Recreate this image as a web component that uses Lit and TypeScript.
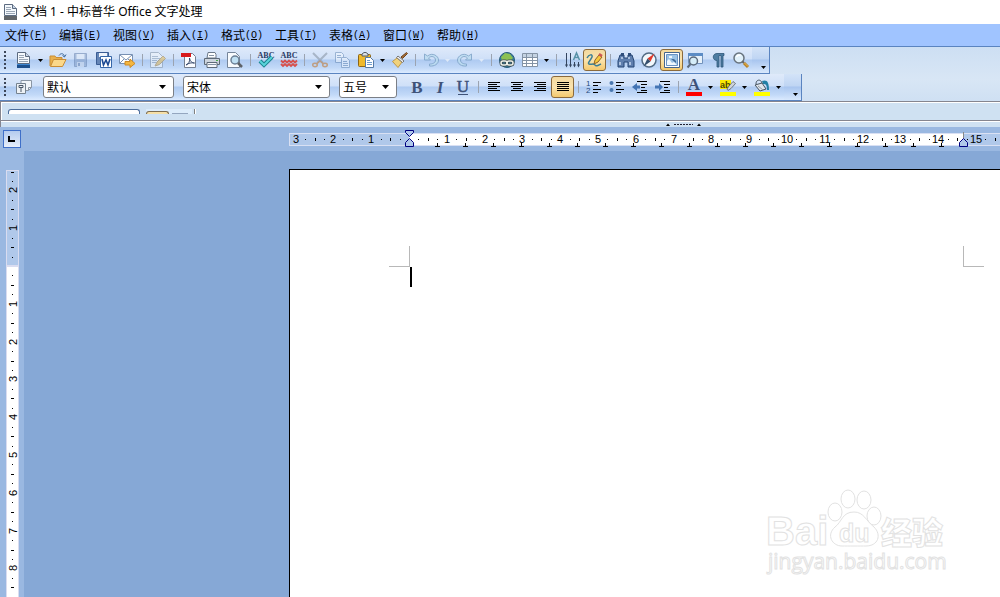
import { LitElement, html, svg, css, nothing } from "lit";
import { customElement, property, state } from "lit/decorators.js";

const doc = svg`<path d="M1.5 .5h8l4 4v7h-12z" fill="#f4f8fc" stroke="#5c6b80"/><path d="M9.5 .5v4h4" fill="#c9d6e6" stroke="#5c6b80"/><path d="M3 3.5h5M3 5.5h5M3 7.5h9M3 9.5h9" stroke="#9aa6b5"/>`;

const icons: Record<string, unknown> = {
  app: svg`${doc}<rect x="1" y="12" width="13" height="4" fill="#606468"/>`,
  newdoc: svg`${doc}<path d="M1 12h13v4H1z" fill="#1c4f8c"/><path d="M1 12.500h13" stroke="#3d86d0"/>`,
  open: svg`<path d="M0 14V4h5l1 1.500h6V8" fill="#e9b04c" stroke="#c98d35"/><path d="M.5 14.500L3.500 7.500H16L12.500 14.500z" fill="#fbd88a" stroke="#c98d35"/><path d="M9 3.500c2-3 5-2 5.500 1M12.500 3.500l2 1.500 1.500-2.500" fill="none" stroke="#3d6a9c"/>`,
  save: svg`<g opacity=".5"><path d="M1.500 1.500h12v13h-12z" fill="#7e99c2" stroke="#5a76a5"/><path d="M3.500 2h8v5h-8z" fill="#e6eef8"/><path d="M4 10h7v5H4z" fill="#c7d4e8"/><path d="M5 11h2v3H5z" fill="#5a76a5"/></g>`,
  word: svg`<path d="M.5 .5h12v12H.500z" fill="#6485b6" stroke="#3b5d94"/><path d="M3 1h8v4H3z" fill="#eff4fb"/><path d="M4.500 4.500h11v11h-11z" fill="#fff" stroke="#3566a8"/><path d="M6 7l1.500 6L10 8l2 5 2-6" fill="none" stroke="#1c4a94" stroke-width="1.600"/>`,
  mail: svg`<path d="M.5 2.500h13v9H.500z" fill="#fff" stroke="#7790b3"/><path d="M1 3l6 5 6-5M1 11l4-4M13 11L9 7" fill="none" stroke="#7790b3"/><path d="M6 9.500h5V7l5 4.500-5 4V13H6z" fill="#f4b63f" stroke="#ce8a22"/>`,
  edit: svg`<g opacity=".6"><path d="M.5 .5h8l4 4v11H.500z" fill="#eff5fb" stroke="#8899ad"/><path d="M2 4.500h6M2 6.500h8M2 8.500h5M2 10.500h4" stroke="#93a6bc"/><path d="M5 14l2-4 6-6 2.500 2.500-6 6z" fill="#e2bd62" stroke="#a78b55"/></g>`,
  pdf: svg`<path d="M3.500 1.500h8l3 3v11h-11z" fill="#fafcff" stroke="#747f90"/><path d="M0 1h10v4H0z" fill="#d7191c"/><path d="M5 13c3-1 4-4 3.500-7 1 4 3 5 5 5-3-.5-6 0-8.500 2z" fill="none" stroke="#3a4d70"/>`,
  print: svg`<path d="M4 .5h7l1 2V6H3z" fill="#fff" stroke="#6c7989"/><path d="M.5 6.500h15v6H.500z" fill="#cdd5de" stroke="#5e6a78"/><path d="M3 10.500h10v5H3z" fill="#f6f8fb" stroke="#5e6a78"/><path d="M4 12.500h8M5 3.500h5" stroke="#8694a5"/><path d="M12 8h2v1h-2z" fill="#4caa49"/>`,
  preview: svg`<path d="M.5 .5h8l4 4v11H.500z" fill="#f8fbfe" stroke="#75859a"/><circle cx="8" cy="8" r="4" fill="#bfe0f4" stroke="#6b7f96" stroke-width="1.500"/><path d="M11 11l4 4" stroke="#5d6268" stroke-width="2.500"/>`,
  abcheck: svg`<text x="8" y="6" text-anchor="middle" class="abc">ABC</text><path d="M2 9l4 4 8-8" fill="none" stroke="#19828d" stroke-width="4"/><path d="M2 9l4 4 8-8" fill="none" stroke="#59d3da" stroke-width="2"/>`,
  abwave: svg`<text x="8" y="6" text-anchor="middle" class="abc">ABC</text><path d="M0 8.500l2 2 2-2 2 2 2-2 2 2 2-2 2 2 2-2M0 12l2 2 2-2 2 2 2-2 2 2 2-2 2 2 2-2" fill="none" stroke="#d64f4c" stroke-width="1.800"/>`,
  cut: svg`<g opacity=".6"><path d="M1 1l10 10M15 1L5 11" stroke="#8b98a8" stroke-width="2"/><ellipse cx="3" cy="13" rx="2.300" ry="1.700" fill="none" stroke="#c27c38" stroke-width="1.500"/><ellipse cx="13" cy="13" rx="2.300" ry="1.700" fill="none" stroke="#c27c38" stroke-width="1.500"/><path d="M4.500 12L8 9l3.500 3" fill="none" stroke="#c27c38" stroke-width="1.500"/></g>`,
  copy: svg`<g opacity=".5" stroke="#5f83ae" fill="#f4f9ff"><path d="M.5 .5h6l2 2v8H.500z"/><path d="M6.500 5.500h5l3 3v7h-8z"/><path d="M2 3.500h4M2 5.500h4M8 9.500h4M8 11.500h5M8 13.500h5"/></g>`,
  paste: svg`<rect x=".5" y="2.500" width="12" height="12" rx="1" fill="#efb92c" stroke="#8d6515"/><path d="M4 4V2l2-1.500h2L10 2v2z" fill="#dadfe4" stroke="#555d66"/><path d="M7.500 5.500h5l3 3v7h-8z" fill="#fff" stroke="#557aa6"/><path d="M9 8.500h3M9 10.500h5M9 12.500h5" stroke="#6d9ccc"/>`,
  brush: svg`<path d="M14.500 .5l1 1-5 5-1.500-1.500z" fill="#a46c36" stroke="#6e4520"/><path d="M5 6l5 4-4 5.500-5.500-6z" fill="#f0d27c" stroke="#c09848"/><path d="M6 4l6 5-1.500 1.500-6-5z" fill="#efefef" stroke="#777"/>`,
  undo: svg`<path d="M1.500 2v6h6L5.500 6c3-3 7-1 7 2s-3 4-6 4v2c5 .5 9-2 9-6s-6-8-11-4z" fill="#bbdcf0" stroke="#7aa0c5" opacity=".8"/>`,
  redo: svg`<path d="M14.500 2v6h-6l2-2c-3-3-7-1-7 2s3 4 6 4v2c-5 .5-9-2-9-6s6-8 11-4z" fill="#bbdcf0" stroke="#7aa0c5" opacity=".8"/>`,
  link: svg`<circle cx="8" cy="8" r="7.500" fill="#357b9d" stroke="#285b77"/><path d="M2 5l4-4 5 1 3 4-4 4-7-1z" fill="#8cc152"/><g fill="none" stroke="#414d50" stroke-width="3"><rect x="2" y="9" width="6" height="4" rx="2"/><rect x="8" y="9" width="6" height="4" rx="2"/></g><g fill="none" stroke="#eef2ea" stroke-width="1.500"><rect x="2" y="9" width="6" height="4" rx="2"/><rect x="8" y="9" width="6" height="4" rx="2"/></g>`,
  table: svg`<path d="M.5 1.500h15v13H.500z" fill="#fff" stroke="#8493a5"/><path d="M1 2h14v3H1z" fill="#c5d3e2"/><path d="M.5 5.500h15M.5 8.500h15M.5 11.500h15M4.500 2v12M10.500 2v12" stroke="#8493a5"/>`,
  vertical: svg`<path d="M2.500 1v13M6.500 1v13M10.500 10v4M14.500 10v4" stroke="#33445e"/><path d="M1 12.500h3l-1.500 3zM5 12.500h3l-1.500 3zM9 12.500h3l-1.500 3zM13 12.500h3l-1.500 3z" fill="#33445e"/><path d="M9.500 8l3-7 3 7M10.500 5.500h4" fill="none" stroke="#5792a8" stroke-width="1.500"/>`,
  pen: svg`<path d="M0 6c2-4 6-4 5-1s-5 6-3 7 5-1 6 1 4 0 6-1" fill="none" stroke="#3c7f96" stroke-width="1.500"/><path d="M7 12l1-4 4-5 3 2-4 5z" fill="#f7c83c" stroke="#936324"/><path d="M12 2l3 2" stroke="#ce5753" stroke-width="2.500"/>`,
  binoculars: svg`<path d="M2 3h4v3h4V3h4l2 6v6h-6v-5H6v5H0V9z" fill="#5f7fae" stroke="#274775"/><path d="M3 1h3v3H3zM10 1h3v3h-3z" fill="#304f7c"/><path d="M2 10v3M12 10v3M4 5v2M11 5v2" stroke="#c7d9ef" stroke-width="1.500"/>`,
  compass: svg`<circle cx="8" cy="8" r="7" fill="#f2f8fc" stroke="#526b84" stroke-width="1.500"/><path d="M13.500 1.500L9.500 9.500 6.500 6.500z" fill="#e0392b"/><path d="M2.500 14.500l4-8 3 3z" fill="#35506e"/>`,
  picture: svg`<path d="M.5 .5h15v15H.500z" fill="#fff" stroke="#46658c"/><path d="M2.500 2.500h11v11h-11z" fill="#9cc3e6" stroke="#6b94c4"/><path d="M3 13V9l2-2 3 4 2-1 3 3zM5 4h3v2H5z" fill="#f0f7fd"/><path d="M7 7l5 4v-2l-2-2z" fill="#416b99"/>`,
  pageview: svg`<path d="M1.500 1.500h14v10h-14z" fill="#e6f1fb" stroke="#7192bc"/><path d="M1 1h15v3H1z" fill="#5c8cc5"/><circle cx="6.500" cy="9" r="4" fill="#d4ecf8" stroke="#5b6a7c" stroke-width="1.500"/><path d="M3.500 12l-3 3.500" stroke="#5b6a7c" stroke-width="2"/>`,
  pilcrow: svg`<path d="M7 8.500C2 8.500 2 1.500 7 1.500h7v2h-1V15h-2V3.500H9V15H7V8.500z" fill="#4e7da2" stroke="#2e5779" stroke-width=".8"/>`,
  zoom: svg`<circle cx="6" cy="6" r="5" fill="#e1f1fa" stroke="#68737e" stroke-width="1.500"/><path d="M3.500 5c1-2 3-2 4-1.500" stroke="#fff" fill="none" stroke-width="1.500"/><path d="M9.500 9.500l1.500 1.500" stroke="#666" stroke-width="2"/><path d="M11 11l4 4" stroke="#b68127" stroke-width="3"/><path d="M11.500 11l3.500 3.500" stroke="#edbd58"/>`,
  styles: svg`<path d="M5 1.500h10.500v7l-3 3H5z" fill="#f1f5f9" stroke="#8a96a4"/><path d="M12.500 11.500v-3h3" fill="none" stroke="#8a96a4"/><path d="M.5 4.500h9v10h-9z" fill="#edf1f5" stroke="#75828f"/><path d="M3 6.500h4v2H3zM5 8.500V13" fill="none" stroke="#4b5868"/>`,
  bold: svg`<text x="8" y="14" text-anchor="middle" class="fmt">B</text>`,
  italic: svg`<text x="8" y="14" text-anchor="middle" class="fmt italic">I</text>`,
  underline: svg`<text x="8" y="13" text-anchor="middle" class="fmt light">U</text><path d="M3 15.500h10" stroke="#3f5278"/>`,
  left: svg`<path d="M2 3.500h12M2 5.500h9M2 7.500h12M2 9.500h9M2 11.500h12" stroke="#000"/>`,
  center: svg`<path d="M2 3.500h12M4 5.500h8M2 7.500h12M4 9.500h8M2 11.500h12" stroke="#000"/>`,
  right: svg`<path d="M2 3.500h12M5 5.500h9M2 7.500h12M5 9.500h9M2 11.500h12" stroke="#000"/>`,
  justify: svg`<path d="M2 3.500h12M2 5.500h12M2 7.500h12M2 9.500h12M2 11.500h12" stroke="#000"/>`,
  numbers: svg`<text x="0" y="7" class="num">1</text><text x="0" y="14" class="num">2</text><path d="M7 3.500h8M7 6.500h5M7 10.500h8M7 13.500h5" stroke="#000"/>`,
  bullets: svg`<circle cx="2.500" cy="4" r="2" fill="#4a78b0"/><circle cx="2.500" cy="11" r="2" fill="#4a78b0"/><path d="M7 3.500h8M7 6.500h5M7 10.500h8M7 13.500h5" stroke="#000"/>`,
  outdent: svg`<path d="M5 2.500h10M9 5.500h6M9 8.500h4M9 11.500h6M5 13.500h10" stroke="#000"/><path d="M0 8l5-4v2.500h3v3H5V12z" fill="#4475b4"/>`,
  indent: svg`<path d="M5 2.500h10M9 5.500h6M9 8.500h4M9 11.500h6M5 13.500h10" stroke="#000"/><path d="M8 8L4 4v2.500H0v3h4V12z" fill="#4475b4"/>`,
  color: svg`<text x="8" y="11" text-anchor="middle" class="fmt">A</text><path d="M0 13h16v4H0z" fill="#f00"/>`,
  highlight: svg`<path d="M0 1h11v9H0z" fill="#fbe900"/><text x="0" y="9" class="ab">ab</text><path d="M7 10l2-3 4-4.500 2.500 2-4.500 5-3 2z" fill="#ced4d9" stroke="#5a6268" stroke-width=".8"/><path d="M0 13h16v4H0z" fill="#ff0"/>`,
  fill: svg`<path d="M8 2c5-2 7 1 7 9h-2c0-5-1-6-4-6z" fill="#2380a5"/><path d="M1 6l7-2 4 6-6 2z" fill="#e0e5ea" stroke="#46535f"/><path d="M2 5c0-5 5-5 6-1" fill="none" stroke="#46535f"/><path d="M4 7l5 4" stroke="#8d99a5"/><path d="M0 13h16v4H0z" fill="#ff0"/>`,
};

interface Tool {
  kind: "button" | "menu" | "sep";
  icon?: string;
  label?: string;
  on?: boolean;
  off?: boolean;
}
const b = (icon: string, label: string, flags: Partial<Tool> = {}): Tool => ({ kind: "button", icon, label, ...flags });
const m = (label: string, off = false): Tool => ({ kind: "menu", label, off });
const s: Tool = { kind: "sep" };

const standardTools: Tool[] = [
  b("newdoc", "新建"), m("新建类型"), b("open", "打开"), b("save", "保存"), b("word", "另存为"), b("mail", "发送邮件"), s,
  b("edit", "编辑文件"), s, b("pdf", "导出PDF"), b("print", "打印"), b("preview", "页面预览"), s,
  b("abcheck", "拼写检查"), b("abwave", "自动拼写检查"), s, b("cut", "剪切"), b("copy", "复制"), b("paste", "粘贴"), m("粘贴选项"),
  b("brush", "格式刷"), s, b("undo", "撤消"), m("撤消列表", true), b("redo", "恢复"), m("恢复列表", true), s,
  b("link", "超链接"), b("table", "表格"), m("表格尺寸"), s, b("vertical", "文字方向"), b("pen", "绘图", { on: true }), s,
  b("binoculars", "查找和替换"), b("compass", "导航"), b("picture", "图库", { on: true }), b("pageview", "数据源"),
  b("pilcrow", "非打印字符"), b("zoom", "显示比例"),
];
const formatTools: Tool[] = [
  b("bold", "粗体"), b("italic", "斜体"), b("underline", "下划线"), s,
  b("left", "左对齐"), b("center", "居中"), b("right", "右对齐"), b("justify", "两端对齐", { on: true }), s,
  b("numbers", "编号"), b("bullets", "项目符号"), b("outdent", "减少缩进"), b("indent", "增加缩进"), s,
  b("color", "字体颜色"), m("字体颜色列表"), b("highlight", "突出显示"), m("突出显示列表"), b("fill", "背景颜色"), m("背景颜色列表"),
];

const caret = html`<svg class="caret" width="5" height="3" viewBox="0 0 5 3"><path d="M0 0h5L2.500 3z"/></svg>`;

@customElement("tool-bar")
class ToolBar extends LitElement {
  @property({ attribute: false }) tools: Tool[] = [];

  static styles = css`
    :host { display: flex; align-items: center; height: 26px; padding-left: 4px; border-right: 1px solid #5a84c0; border-bottom: 1px solid #5a84c0;
      background: linear-gradient(#dfeafa 0, #cfe0f8 46%, #aecaf1 50%, #c2d9f8 80%, #dcebff 100%); }
    .grip { width: 2px; height: 18px; margin-right: 6px; background: repeating-linear-gradient(#3c4658 0 2px, transparent 2px 4px); }
    button { display: grid; place-items: center; box-sizing: border-box; height: 22px; width: 23px; padding: 0; border: 0; background: none; flex: none; }
    .arrow { width: 11px; }
    .on { border: 1px solid #8b6a3c; border-radius: 3px; background: linear-gradient(#f3d9a0, #fae3ae 50%, #f4c96e); }
    .icon { display: block; overflow: visible; }
    .caret { fill: #000; }
    .off .caret { fill: #dfeaf8; }
    .sep { width: 1px; height: 12px; margin: 0 3px 0 4px; background: #9ba3b0; flex: none; }
    .more { width: 17px; align-items: end; justify-items: end; padding: 0 3px 4px 0; background: linear-gradient(#d3e3f8, #bfd5f3 46%, #a8c5ef 50%, #d8e8fd); height: 26px; }
    .abc { font: bold 8px "Liberation Serif", serif; fill: #283a63; }
    .fmt { font: bold 17px "Liberation Serif", serif; fill: #3f5278; }
    .italic { font-style: italic; }
    .light { font-weight: normal; stroke: #3f5278; stroke-width: .5px; }
    .num { font: 8px "Liberation Sans", sans-serif; fill: #234a7c; }
    .ab { font: bold 9px "Liberation Sans", sans-serif; fill: #4c4400; }
  `;

  render() {
    return html`<span class="grip"></span><slot></slot>
      ${this.tools.map((t) =>
        t.kind === "sep"
          ? html`<span class="sep"></span>`
          : t.kind === "menu"
            ? html`<button class="arrow ${t.off ? "off" : ""}" aria-label=${t.label!}>${caret}</button>`
            : html`<button class=${t.on ? "on" : ""} aria-label=${t.label!} aria-pressed=${t.on ? "true" : nothing}>
                <svg class="icon" width="16" height="16" viewBox="0 0 16 16">${icons[t.icon!]}</svg>
              </button>`
      )}
      <button class="more" aria-label="更多按钮">${caret}</button>`;
  }
}

const CM = 37.8;

@customElement("page-ruler")
class PageRuler extends LitElement {
  @property({ type: Boolean }) vertical = false;
  @state() private extent = 0;
  private observer?: ResizeObserver;

  static styles = css`
    :host { display: block; overflow: hidden; }
    svg { display: block; overflow: visible; }
    text { font: 11px "Liberation Sans", sans-serif; fill: #000; text-anchor: middle; }
  `;

  connectedCallback() {
    super.connectedCallback();
    this.observer = new ResizeObserver(() => (this.extent = this.vertical ? this.clientHeight : this.clientWidth));
    this.observer.observe(this);
  }

  disconnectedCallback() {
    this.observer?.disconnect();
    super.disconnectedCallback();
  }

  private marks(zero: number, from: number) {
    const out = [];
    for (let q = from; ; q++) {
      const at = Math.round(zero + (q * CM) / 4);
      const part = Math.abs(q) % 4;
      if (at + (part === 0 ? 8 : 1) > this.extent) break;
      if (part === 0) {
        if (q === 0) continue;
        out.push(this.vertical
          ? svg`<text transform="translate(11 ${at}) rotate(-90)">${Math.abs(q / 4)}</text>`
          : svg`<text x=${at} y="10">${Math.abs(q / 4)}</text>`);
      } else {
        const len = part === 2 ? 3 : 1;
        out.push(this.vertical
          ? svg`<rect x=${7 - (len + 1) / 2} y=${at} width=${len} height="1"/>`
          : svg`<rect x=${at} y=${7 - (len + 1) / 2} width="1" height=${len}/>`);
      }
    }
    return out;
  }

  render() {
    if (this.vertical) {
      return html`<svg width="13" height=${this.extent}>
        <rect width="13" height="100%" fill="#d9dcf0"/><rect x="1" y="1" width="11" height="94" fill="#b0c8ea"/>
        <rect x="1" y="97" width="11" height="100%" fill="#fff"/>${this.marks(96, -10)}</svg>`;
    }
    const tabs = Array.from({ length: 19 }, (_, i) => 148 + i * 28);
    return html`<svg width="100%" height="15">
      <rect width="100%" height="13" fill="#d9e0f3"/><rect x="1" y="1" width="100%" height="11" fill="#b0c8ea"/>
      <rect x="120" y="1" width="554" height="11" fill="#fff"/>
      ${this.marks(120, -12)}
      ${tabs.map((x) => svg`<path d="M${x + 0.5} 10v4M${x - 2} 13.500h5" stroke="#000"/>`)}
      <g fill="#b0c8ea" stroke="#000080"><path d="M116.500 -2.500h8v2l-4 4-4-4zM116.500 13.500h8v-4l-4-4-4 4z"/>
      <path d="M670.500 13.500h8v-4l-4-4-4 4z"/></g><path d="M674.500 -1v6" stroke="#888"/></svg>`;
  }
}

@customElement("app-root")
class AppRoot extends LitElement {
  static styles = css`
    :host { display: flex; flex-direction: column; height: 100vh; min-width: 0; overflow: hidden; color: #000;
      font: 12px "Noto Sans CJK SC", sans-serif; background: #86a8d6; }
    .title { display: flex; align-items: center; gap: 4px; height: 24px; padding-left: 3px; background: #fff; flex: none; }
    .title h1 { margin: 0; font: 12px/24px "Noto Sans", "Noto Sans CJK SC", sans-serif; }
    .menu { display: flex; height: 22px; background: #a0c4ff; border-bottom: 1px solid #5a84c0; flex: none; }
    .menu button { display: flex; align-items: center; width: 54px; padding: 0 0 0 5px; border: 0; background: none; color: #000; white-space: nowrap;
      font: 12px "Liberation Mono", "Noto Sans CJK SC", monospace; }
    .key { font-size: 10px; }
    .bars { display: flex; flex-direction: column; align-items: flex-start; flex: none; background: linear-gradient(#cddff3, #d8e6f5 60%, #cfe0f3); }
    .combo { display: grid; grid-template-columns: 1fr 21px; align-items: center; box-sizing: border-box; height: 22px; margin-right: 9px;
      border: 1px solid #7b7f86; border-radius: 3px; background: #fff; }
    .combo select { grid-area: 1 / 1 / 2 / 3; appearance: none; width: 100%; height: 20px; margin: 0; padding: 0 0 0 3px; border: 0; background: none;
      color: #000; font: 12px/20px "Noto Sans CJK SC", sans-serif; }
    .combo svg { grid-area: 1 / 2; justify-self: center; pointer-events: none; }
    .style { width: 131px; }
    .font { width: 147px; }
    .size { width: 58px; margin-right: 8px; }
    .stylist { display: grid; place-items: center; width: 23px; height: 22px; margin-right: 8px; padding: 0; border: 0; background: none; }
    .formula { display: flex; gap: 6px; height: 5px; padding: 6px 7px 6px 6px; overflow: hidden; 
      background: #cfe1f2; border: 1px solid #fff; border-right: 0; border-bottom: 0; }
    .frame { border-top: 1px solid #85858f; border-left: 1px solid #85858f; flex: none; }
    .name { width: 130px; height: 4px; border: 1px solid #4a6c9b; border-bottom: 0; border-radius: 3px 3px 0 0; background: #fff; }
    .stubs { display: flex; gap: 3px; align-items: end; width: 46px; height: 5px; background: #dcecfb; }
    .stub { width: 21px; height: 2px; border: 1px solid #7c6c50; border-bottom: 0; border-radius: 3px 3px 0 0; background: #f6dfa6; }
    .dash { width: 16px; height: 1px; background: #94a6bf; }
    .end { width: 1px; height: 5px; margin-left: -4px; background: #808080; border-right: 1px solid #fff; }
    .split { height: 5px; padding-left: 664px; background: #cfe1f2; border-top: 1px solid #fff; }
    .split svg { display: block; }
    .rulerrow { display: flex; height: 24px; background: #9ab8e1; flex: none; }
    .tabcell { box-sizing: border-box; width: 18px; height: 18px; margin: 3px 268px 0 3px; padding: 0; border: 1px solid #3f6fc8; flex: none;
      background: linear-gradient(#b4cbee, #e6eefa); }
    .tabcell svg { display: block; }
    .across { flex: 1; min-width: 0; padding-top: 3px; }
    .across page-ruler { padding-top: 3px; }
    .work { display: flex; flex: 1; min-height: 0; position: relative; }
    .side { display: flex; width: 18px; padding: 19px 0 0 6px; background: #9ab8e1; overflow: hidden; flex: none; }
    .canvas { flex: 1; min-width: 0; overflow: hidden; padding: 18px 0 0 265px; }
    .page { box-sizing: border-box; width: 794px; height: 1123px; padding: 76px 98px; border: 1px solid #000; background: #fff; }
    .corners { display: flex; justify-content: space-between; padding-left: 1px; }
    .corner { box-sizing: border-box; width: 21px; height: 21px; border: 0 solid #b8b8b8; border-bottom-width: 1px; }
    .l { border-right-width: 1px; }
    .r { border-left-width: 1px; }
    .cursor { width: 2px; height: 20px; margin-left: 22px; background: #000; }
    .mark { position: absolute; right: 44px; bottom: 20px; pointer-events: none; }
    .mark text { fill: #fff; stroke: #e2e2e2; stroke-width: 1px; }
    .logo { font: bold 40px "Liberation Sans", sans-serif; }
    .du { font: bold 25px "Liberation Sans", sans-serif; }
    .cn { font: 900 31px "Noto Sans CJK SC", sans-serif; }
    .url { font: 21px "Open Sans", sans-serif; }
  `;

  private menus = [["文件", "F"], ["编辑", "E"], ["视图", "V"], ["插入", "I"], ["格式", "O"], ["工具", "T"], ["表格", "A"], ["窗口", "W"], ["帮助", "H"]];
  private combos = [["style", "样式", "默认"], ["font", "字体", "宋体"], ["size", "字号", "五号"]];

  render() {
    return html`
      <header class="title"><svg width="16" height="16" viewBox="0 0 16 16">${icons.app}</svg><h1>文档 1 - 中标普华 Office 文字处理</h1></header>
      <nav class="menu">
        ${this.menus.map(([name, key]) => html`<button><span>${name}</span><span class="key">(<u>${key}</u>)</span></button>`)}
      </nav>
      <div class="bars">
        <tool-bar .tools=${standardTools}></tool-bar>
        <tool-bar .tools=${formatTools}>
          <button class="stylist" aria-label="样式和格式"><svg width="16" height="16" viewBox="0 0 16 16">${icons.styles}</svg></button>
          ${this.combos.map(([cls, label, value]) => html`<span class="combo ${cls}">
            <select aria-label=${label}><option>${value}</option></select>
            <svg width="7" height="4" viewBox="0 0 7 4"><path d="M0 0h7L3.500 4z"/></svg></span>`)}
        </tool-bar>
      </div>
      <div class="frame"><div class="formula">
        <span class="name"></span><span class="stubs"><i class="stub"></i><i class="dash"></i></span><i class="end"></i>
      </div></div>
      <div class="frame"><div class="split">
        <svg width="36" height="5" viewBox="0 0 36 5"><path d="M1 4h4L3 1.500zM32 4h4L34 1.500z"/><path d="M9 2.500h19" stroke="#223" stroke-dasharray="2 1"/></svg>
      </div></div>
      <div class="rulerrow">
        <button class="tabcell" aria-label="制表符类型"><svg width="16" height="16"><path d="M4 5h2v4h5v2H4z"/></svg></button>
        <div class="across"><page-ruler></page-ruler></div>
      </div>
      <main class="work">
        <div class="side"><page-ruler vertical></page-ruler></div>
        <div class="canvas"><article class="page">
          <div class="corners"><span class="corner l"></span><span class="corner r"></span></div>
          <div class="cursor"></div>
        </article></div>
        <svg class="mark" width="192" height="92" viewBox="0 0 192 92">
          <text class="logo" x="2" y="60">Bai</text>
          <g fill="#fff" stroke="#e2e2e2"><ellipse cx="71" cy="27" rx="7" ry="9"/><ellipse cx="84" cy="14" rx="7" ry="9"/><ellipse cx="100" cy="15" rx="7" ry="9"/><ellipse cx="110" cy="31" rx="7" ry="9"/>
          <path d="M90 27c-12 0-12 10-19 15-9 8-3 19 7 19 6 0 18 0 24 0 12 0 16-11 8-19-8-6-10-15-20-15z"/></g>
          <text class="du" x="75" y="57">du</text><text class="cn" x="117" y="59">经验</text>
          <text class="url" x="4" y="84">jingyan.baidu.com</text>
        </svg>
      </main>`;
  }
}
